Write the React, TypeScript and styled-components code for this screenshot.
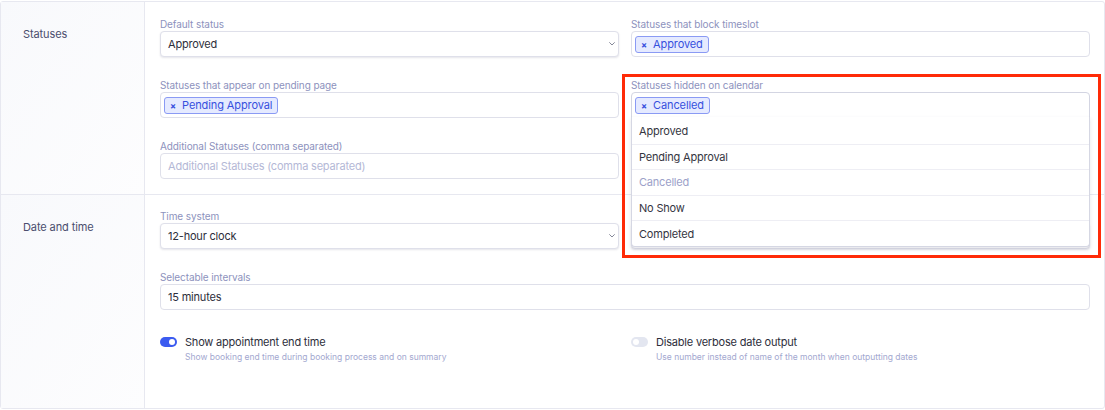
import React from "react";
import styled, { createGlobalStyle } from "styled-components";

const Global = createGlobalStyle`
  html, body { margin: 0; padding: 0; background: #ffffff; }
  body { font-family: Inter, "Noto Sans", "Liberation Sans", sans-serif; -webkit-font-smoothing: antialiased; }
  * { box-sizing: border-box; }
`;

const Card = styled.div`
  margin-top: 1px;
  width: 1105px;
  border: 1px solid #e7e8f0;
  border-radius: 3px;
  background: #fff;
`;

const Section = styled.section<{ $last?: boolean }>`
  display: grid;
  grid-template-columns: 144px 1fr;
  border-bottom: ${(p) => (p.$last ? "none" : "1px solid #e7e8f0")};
`;

const Side = styled.div`
  background: linear-gradient(to bottom right, #f8f9fc, #fdfdfe);
  border-right: 1px solid #e7e8f0;
  padding: 24px 0 0 22px;
  font-size: 11px;
  letter-spacing: -0.1px;
  line-height: 16px;
  color: #4b4e6e;
`;

const Content = styled.div<{ $pt: number; $pb: number }>`
  padding: ${(p) => p.$pt}px 14px ${(p) => p.$pb}px 15px;
  display: grid;
  grid-template-columns: 1fr 1fr;
  column-gap: 12px;
  row-gap: 22px;
`;

const Field = styled.div<{ $full?: boolean }>`
  position: relative;
  grid-column: ${(p) => (p.$full ? "1 / -1" : "auto")};
`;

const Label = styled.div`
  font-size: 10px;
  letter-spacing: -0.1px;
  line-height: 12px;
  height: 12px;
  color: #8d92bd;
  margin-bottom: 1px;
`;

const Box = styled.div<{ $open?: boolean; $shadow?: boolean }>`
  position: relative;
  height: 26px;
  border: 1px solid ${(p) => (p.$open ? "#d3d5e2" : "#dfe0ea")};
  border-radius: ${(p) => (p.$open ? "4px 4px 0 0" : "4px")};
  background: #fff;
  box-shadow: ${(p) => (p.$shadow ? "0 1px 2px rgba(40, 45, 80, 0.12)" : "none")};
  display: flex;
  align-items: center;
  padding: 0 4px 0 7px;
  font-size: 11px;
  letter-spacing: -0.2px;
  color: #2d2e3b;
`;

const TagBox = styled(Box)`
  padding-left: 3px;
`;

const Placeholder = styled.span`
  color: #b4b8d6;
`;

const Chevron = styled.svg`
  position: absolute;
  right: 3px;
  top: 50%;
  margin-top: -2px;
  width: 6px;
  height: 4px;
`;

const Chip = styled.span`
  display: inline-flex;
  align-items: center;
  gap: 6px;
  height: 17px;
  padding: 0 5px 0 5px;
  border: 1px solid #8a9af4;
  border-radius: 3px;
  background: #e5eaff;
  color: #3650de;
  font-size: 11px;
  letter-spacing: -0.1px;
  line-height: 15px;
`;

const ChipX = styled.span`
  font-size: 9px;
  font-weight: 700;
  line-height: 9px;
`;

const Menu = styled.ul`
  position: absolute;
  z-index: 5;
  left: -1px;
  right: -1px;
  top: 100%;
  margin: 0;
  padding: 1px 0 0;
  list-style: none;
  background: #fff;
  border: 1px solid #d5d7e3;
  border-top: none;
  border-radius: 0 0 4px 4px;
  box-shadow: 0 2px 4px rgba(40, 45, 80, 0.12);
`;

const MenuItem = styled.li<{ $muted?: boolean }>`
  height: 25.6px;
  display: flex;
  align-items: center;
  padding-left: 7px;
  font-size: 11px;
  letter-spacing: -0.2px;
  color: ${(p) => (p.$muted ? "#9ca1c9" : "#34353f")};
  border-top: 1px solid #eeeef4;
  &:first-child { border-top: none; }
`;

const Highlight = styled.div`
  position: absolute;
  z-index: 6;
  left: -9px;
  top: -5px;
  right: -11px;
  height: 184px;
  border: 3px solid #ff2a07;
  pointer-events: none;
`;

const ToggleRow = styled.div`
  display: flex;
  align-items: flex-start;
  gap: 8px;
  margin-top: 3px;
`;

const Toggle = styled.span<{ $on?: boolean }>`
  position: relative;
  flex: none;
  width: 17px;
  height: 10px;
  margin-top: 2px;
  border-radius: 5px;
  background: ${(p) => (p.$on ? "#3b5bf0" : "#e3e6f0")};
  &::after {
    content: "";
    position: absolute;
    top: 2px;
    left: ${(p) => (p.$on ? "9px" : "2px")};
    width: 6px;
    height: 6px;
    border-radius: 50%;
    background: #fff;
  }
`;

const ToggleText = styled.div`
  display: flex;
  flex-direction: column;
`;

const ToggleTitle = styled.div`
  font-size: 11px;
  letter-spacing: -0.2px;
  line-height: 14px;
  color: #2d2e3b;
`;

const ToggleDesc = styled.div`
  font-size: 8.5px;
  line-height: 12px;
  margin-top: 2px;
  color: #a3a8cf;
`;

const ChevronIcon = () => (
  <Chevron viewBox="0 0 6 4">
    <path d="M0.6 0.6 L3 3 L5.4 0.6" fill="none" stroke="#777a8c" strokeWidth="0.9" strokeLinecap="round" />
  </Chevron>
);

const Tag = ({ text }: { text: string }) => (
  <Chip>
    <ChipX>×</ChipX>
    {text}
  </Chip>
);

export default function App() {
  const options = ["Approved", "Pending Approval", "Cancelled", "No Show", "Completed"];
  return (
    <>
      <Global />
      <Card>
        <Section>
          <Side>Statuses</Side>
          <Content $pt={16} $pb={15}>
            <Field>
              <Label>Default status</Label>
              <Box $shadow>
                Approved
                <ChevronIcon />
              </Box>
            </Field>
            <Field>
              <Label>Statuses that block timeslot</Label>
              <TagBox>
                <Tag text="Approved" />
              </TagBox>
            </Field>
            <Field>
              <Label>Statuses that appear on pending page</Label>
              <TagBox>
                <Tag text="Pending Approval" />
              </TagBox>
            </Field>
            <Field>
              <Highlight />
              <Label>Statuses hidden on calendar</Label>
              <TagBox $open>
                <Tag text="Cancelled" />
                <Menu>
                  {options.map((o) => (
                    <MenuItem key={o} $muted={o === "Cancelled"}>
                      {o}
                    </MenuItem>
                  ))}
                </Menu>
              </TagBox>
            </Field>
            <Field>
              <Label>Additional Statuses (comma separated)</Label>
              <Box>
                <Placeholder>Additional Statuses (comma separated)</Placeholder>
              </Box>
            </Field>
          </Content>
        </Section>
        <Section $last>
          <Side>Date and time</Side>
          <Content $pt={15} $pb={45}>
            <Field>
              <Label>Time system</Label>
              <Box $shadow>
                12-hour clock
                <ChevronIcon />
              </Box>
            </Field>
            <Field>
              <Label />
              <Box $shadow />
            </Field>
            <Field $full>
              <Label>Selectable intervals</Label>
              <Box>15 minutes</Box>
            </Field>
            <ToggleRow>
              <Toggle $on />
              <ToggleText>
                <ToggleTitle>Show appointment end time</ToggleTitle>
                <ToggleDesc>Show booking end time during booking process and on summary</ToggleDesc>
              </ToggleText>
            </ToggleRow>
            <ToggleRow>
              <Toggle />
              <ToggleText>
                <ToggleTitle>Disable verbose date output</ToggleTitle>
                <ToggleDesc>Use number instead of name of the month when outputting dates</ToggleDesc>
              </ToggleText>
            </ToggleRow>
          </Content>
        </Section>
      </Card>
    </>
  );
}
